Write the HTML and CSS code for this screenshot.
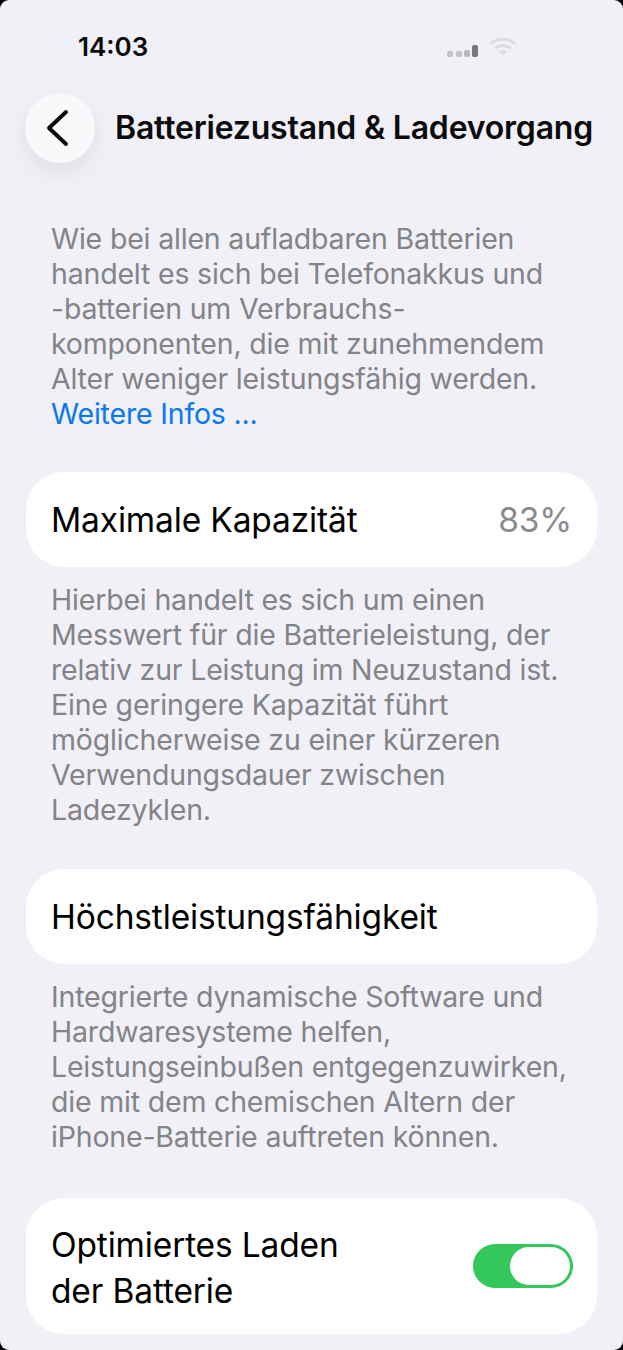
FILE: index.html
```html
<!DOCTYPE html>
<html lang="de">
<head>
    <meta charset="UTF-8">
    <meta name="viewport" content="width=device-width, initial-scale=1.0">
    <title>Batteriezustand &amp; Ladevorgang</title>
    <link rel="stylesheet" href="styles.css">
</head>
<body>
    <div class="screen">
        <div class="status">
            <span class="time">14:03</span>
            <div class="status-icons">
                <svg class="signal" width="32" height="14" viewBox="0 0 32 14">
                    <rect x="0" y="7" width="6" height="6" rx="2" fill="#c3c3c7"/>
                    <rect x="9" y="7" width="6" height="6" rx="2" fill="#c3c3c7"/>
                    <rect x="17" y="6" width="6" height="7" rx="2" fill="#b9b9bd"/>
                    <rect x="25" y="1" width="6" height="12" rx="2" fill="#77777b"/>
                </svg>
                <svg class="wifi" width="28" height="20" viewBox="0 0 28 20" fill="none" stroke="#dcdce0" stroke-width="3">
                    <path d="M1.500 8C8.500 1.500 19.500 1.500 26.500 8"/>
                    <path d="M6 12.500C10.500 8.500 17.500 8.500 22 12.500"/>
                    <path d="M14 19.500L9.800 15.500C12 13.700 16 13.700 18.200 15.500Z" fill="#dcdce0" stroke="none"/>
                </svg>
            </div>
        </div>

        <div class="header">
            <div class="back">
                <svg width="26" height="38" viewBox="0 0 26 38" fill="none" stroke="#0b0b0d" stroke-width="4" stroke-linecap="round" stroke-linejoin="round">
                    <path d="M21 3L4 19L21 35"/>
                </svg>
            </div>
            <div class="title">Batteriezustand &amp; Ladevorgang</div>
        </div>

        <p class="note intro">Wie bei allen aufladbaren Batterien<br>handelt es sich bei Telefonakkus und<br>-batterien um Verbrauchs-<br>komponenten, die mit zunehmendem<br>Alter weniger leistungsfähig werden.<br><a class="link">Weitere Infos ...</a></p>

        <div class="card">
            <span>Maximale Kapazität</span>
            <span class="value">83%</span>
        </div>
        <p class="note">Hierbei handelt es sich um einen<br>Messwert für die Batterieleistung, der<br>relativ zur Leistung im Neuzustand ist.<br>Eine geringere Kapazität führt<br>möglicherweise zu einer kürzeren<br>Verwendungsdauer zwischen<br>Ladezyklen.</p>

        <div class="card">
            <span>Höchstleistungsfähigkeit</span>
        </div>
        <p class="note last-note">Integrierte dynamische Software und<br>Hardwaresysteme helfen,<br>Leistungseinbußen entgegenzuwirken,<br>die mit dem chemischen Altern der<br>iPhone-Batterie auftreten können.</p>

        <div class="card card-tall">
            <span class="tall-label">Optimiertes Laden<br>der Batterie</span>
            <div class="toggle"><div class="knob"></div></div>
        </div>
    </div>
</body>
</html>
```
FILE: styles.css
```css
html, body {
    margin: 0;
    height: 100%;
    background-color: #000;
}
.screen {
    box-sizing: border-box;
    height: 1350px;
    overflow: hidden;
    padding: 0 26px;
    background-color: #f0f0f6;
    border-radius: 9px;
    font-family: Inter, "Liberation Sans", sans-serif;
    color: #000;
}
.status {
    display: flex;
    justify-content: space-between;
    align-items: center;
    height: 32px;
    padding: 30px 80px 0 52px;
}
.time {
    font-size: 26px;
    font-weight: 600;
    color: #0b0b0d;
}
.status-icons {
    display: flex;
    align-items: flex-start;
    gap: 10px;
    height: 21px;
}
.signal {
    margin-top: 8px;
}
.header {
    display: flex;
    align-items: center;
    gap: 20px;
    margin: 31px 0 0 -1px;
}
.back {
    display: flex;
    align-items: center;
    justify-content: center;
    flex: none;
    width: 70px;
    height: 70px;
    padding-right: 5px;
    box-sizing: border-box;
    background-color: #f9f9fc;
    border-radius: 50%;
    box-shadow: 0 10px 24px rgba(0, 0, 0, 0.07);
}
.title {
    margin-top: -1px;
    font-size: 32px;
    font-weight: 600;
    letter-spacing: -0.2px;
    white-space: nowrap;
    color: #0b0b0d;
}
.note {
    margin: 15px 0 42px;
    padding: 0 25px;
    font-size: 28.5px;
    line-height: 35px;
    letter-spacing: -0.18px;
    white-space: nowrap;
    color: #838388;
}
.intro {
    margin-top: 58px;
    margin-bottom: 41px;
}
.last-note {
    margin-bottom: 44px;
}
.link {
    color: #0a78f0;
}
.card {
    display: flex;
    justify-content: space-between;
    align-items: center;
    box-sizing: border-box;
    height: 95px;
    padding: 0 25px;
    background-color: #fff;
    border-radius: 38px;
    font-size: 33.5px;
    letter-spacing: -0.15px;
    white-space: nowrap;
}
.card-tall {
    height: 136px;
    padding-right: 24px;
    line-height: 46px;
}
.tall-label {
    padding-top: 4px;
}
.value {
    color: #8a8a8e;
}
.toggle {
    display: flex;
    justify-content: flex-end;
    box-sizing: border-box;
    width: 100px;
    height: 44px;
    padding: 3px;
    background-color: #34c759;
    border-radius: 22px;
}
.knob {
    width: 60px;
    height: 38px;
    background-color: #fff;
    border-radius: 19px;
}
```
